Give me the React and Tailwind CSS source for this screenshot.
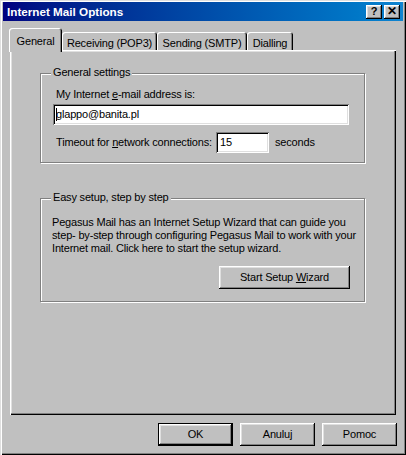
import React from "react";

const raised =
  "shadow-[inset_-1px_-1px_#000,inset_1px_1px_#fff,inset_-2px_-2px_#808080,inset_2px_2px_#dfdfdf]";
const sunken =
  "shadow-[inset_1px_1px_#808080,inset_-1px_-1px_#fff,inset_2px_2px_#000,inset_-2px_-2px_#dfdfdf]";

const GroupBox = ({ title, className, children }) => {
  return (
    <div
      className={`relative ml-[30px] w-[325px] border border-[#808080] shadow-[inset_1px_1px_#fff,1px_1px_#fff] ${className}`}
    >
      <span className="absolute -top-[8px] left-[10px] whitespace-nowrap bg-[#c0c0c0] px-[2px] leading-[13px]">
        {title}
      </span>
      {children}
    </div>
  );
};

const Tab = ({ label, width, active }) => {
  if (active) {
    return (
      <div
        className={`relative z-10 -mb-[2px] flex h-[24px] items-start justify-center rounded-t-[3px] bg-[#c0c0c0] pt-[5px] shadow-[inset_1px_1px_#fff,inset_-1px_0_#000,inset_-2px_0_#808080] ${width}`}
      >
        {label}
      </div>
    );
  }
  return (
    <div
      className={`flex h-[18px] items-start justify-center whitespace-nowrap rounded-t-[3px] pt-[3px] shadow-[inset_1px_1px_#fff,inset_-1px_0_#000,inset_-2px_0_#808080] ${width}`}
    >
      {label}
    </div>
  );
};

const App = () => {
  return (
    <div
      className={`flex h-[455px] w-[406px] flex-col bg-[#c0c0c0] px-[3px] pt-[2px] font-['Liberation_Sans',Arial,sans-serif] text-[11px] tracking-[-0.18px] text-black shadow-[inset_1px_1px_#dfdfdf,inset_2px_2px_#fff,inset_-1px_-1px_#000,inset_-2px_-2px_#808080]`}
    >
      {/* Title bar */}
      <div className="flex h-[19px] items-center justify-between bg-gradient-to-r from-[#000080] to-[#1084d0] pl-[4px] pr-[3px]">
        <span className="text-[11.7px] font-bold tracking-normal text-white">
          Internet Mail Options
        </span>
        <div className="flex gap-[2px]">
          <div
            className={`flex h-[14px] w-[16px] items-center justify-center bg-[#c0c0c0] text-[11px] font-bold leading-none ${raised}`}
          >
            ?
          </div>
          <div
            className={`flex h-[14px] w-[16px] items-center justify-center bg-[#c0c0c0] pb-[1px] text-[12px] font-bold leading-none ${raised}`}
          >
            ✕
          </div>
        </div>
      </div>

      {/* Tabs */}
      <div className="mt-[7px] flex h-[22px] items-end pl-[6px]">
        <Tab label="General" width="w-[53px]" active />
        <Tab label="Receiving (POP3)" width="w-[95px]" />
        <Tab label="Sending (SMTP)" width="w-[90px]" />
        <Tab label="Dialling" width="w-[46px]" />
      </div>

      {/* Panel */}
      <div
        className={`ml-[7px] h-[365px] w-[386px] pt-[23px] shadow-[inset_1px_1px_#fff,inset_-1px_-1px_#000,inset_-2px_-2px_#808080,inset_2px_2px_#dfdfdf]`}
      >
        <GroupBox title="General settings" className="h-[90px] pl-[12px] pt-[14px]">
          <p className="ml-[3px] leading-[13px]">
            My Internet <span className="underline">e</span>-mail address is:
          </p>
          <div
            className={`mt-[3px] flex h-[21px] w-[296px] items-center bg-white pl-[3px] ${sunken}`}
          >
            <span className="mr-[-1px] h-[13px] w-[1px] bg-black"></span>
            glappo@banita.pl
          </div>
          <div className="mt-[7px] flex items-center">
            <span className="ml-[3px] w-[160px] whitespace-nowrap">
              Timeout for <span className="underline">n</span>etwork connections:
            </span>
            <div className={`flex h-[21px] w-[53px] items-center bg-white pl-[4px] ${sunken}`}>
              15
            </div>
            <span className="ml-[6px]">seconds</span>
          </div>
        </GroupBox>

        <GroupBox
          title="Easy setup, step by step"
          className="mt-[35px] h-[104px] pl-[11px] pt-[17px]"
        >
          <p className="whitespace-nowrap leading-[13px]">
            Pegasus Mail has an Internet Setup Wizard that can guide you
            <br />
            step- by-step through configuring Pegasus Mail to work with your
            <br />
            Internet mail. Click here to start the setup wizard.
          </p>
          <div className="mt-[11px] flex justify-end pr-[14px]">
            <button className={`h-[23px] w-[131px] bg-[#c0c0c0] ${raised}`}>
              Start Setup <span className="underline">W</span>izard
            </button>
          </div>
        </GroupBox>
      </div>

      {/* Bottom buttons */}
      <div className="mt-[8px] flex justify-end gap-[7px] pr-[6px]">
        <button className={`h-[23px] w-[75px] border border-black bg-[#c0c0c0] ${raised}`}>
          OK
        </button>
        <button className={`h-[23px] w-[75px] bg-[#c0c0c0] ${raised}`}>Anuluj</button>
        <button className={`h-[23px] w-[75px] bg-[#c0c0c0] ${raised}`}>Pomoc</button>
      </div>
    </div>
  );
};

export default App;
